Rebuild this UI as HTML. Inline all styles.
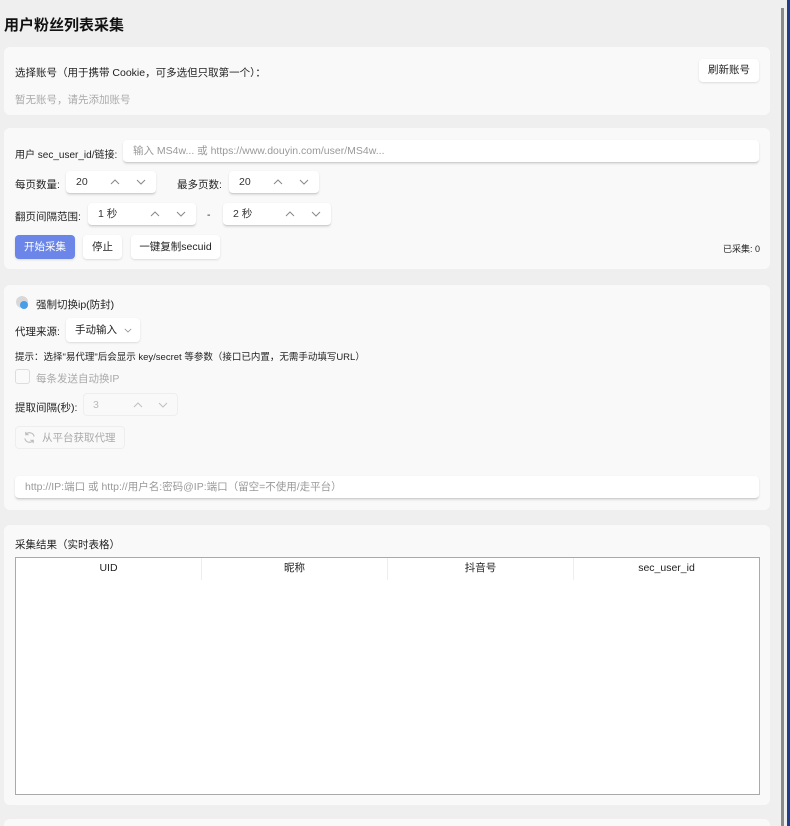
<!DOCTYPE html>
<html><head><meta charset="utf-8"><style>
*{box-sizing:border-box;margin:0;padding:0}
html,body{width:790px;height:826px;overflow:hidden}
body{background:#efefef;font-family:"Liberation Sans","Noto Sans CJK SC",sans-serif;font-size:10.5px;color:#222;position:relative}
.abs{position:absolute}
.card{position:absolute;left:4px;width:766px;background:#f9f9f9;border-radius:6px}
.btn{position:absolute;background:#fff;border-radius:4px;box-shadow:0 1px 2px rgba(0,0,0,.12);text-align:center}
.inp{position:absolute;background:#fff;border-radius:4px;box-shadow:0 1px 2px rgba(0,0,0,.12);border-bottom:1px solid #d0d0d0;color:#333;padding-left:10px}
.arr{position:absolute;top:8px}
.t{position:absolute;white-space:nowrap}
</style></head><body>
<svg width="0" height="0" style="position:absolute"><defs>
<symbol id="up" viewBox="0 0 10 6"><path d="M1 5L5 1L9 5" fill="none" stroke="#888" stroke-width="1"/></symbol>
<symbol id="dn" viewBox="0 0 10 6"><path d="M1 1L5 5L9 1" fill="none" stroke="#888" stroke-width="1"/></symbol>
</defs></svg>
<div class="t" style="left:4px;top:14px;font-size:15px;font-weight:bold;color:#111">用户粉丝列表采集</div>

<div class="card" style="top:47px;height:68px"></div>
<div class="t" style="left:15px;top:65px">选择账号（用于携带 Cookie，可多选但只取第一个）：</div>
<div class="t" style="left:15px;top:92px;color:#aaa">暂无账号，请先添加账号</div>
<div class="btn" style="left:699px;top:59px;width:60px;height:23px;line-height:23px">刷新账号</div>

<div class="card" style="top:128px;height:141px"></div>
<div class="t" style="left:15px;top:146px;font-size:10px">用户 sec_user_id/链接:</div>
<div class="inp" style="left:123px;top:140px;width:636px;height:23px;line-height:23px;color:#999">输入 MS4w... 或 https://www.douyin.com/user/MS4w...</div>
<div class="t" style="left:15px;top:177px">每页数量:</div>
<div class="inp" style="left:66px;top:171px;width:90px;height:23px;line-height:23px">20<svg class="arr" style="left:44px" width="10" height="6"><use href="#up"/></svg><svg class="arr" style="left:70px" width="10" height="6"><use href="#dn"/></svg></div>
<div class="t" style="left:177px;top:177px">最多页数:</div>
<div class="inp" style="left:229px;top:171px;width:90px;height:23px;line-height:23px">20<svg class="arr" style="left:44px" width="10" height="6"><use href="#up"/></svg><svg class="arr" style="left:70px" width="10" height="6"><use href="#dn"/></svg></div>
<div class="t" style="left:15px;top:209px">翻页间隔范围:</div>
<div class="inp" style="left:88px;top:203px;width:108px;height:23px;line-height:23px">1 秒<svg class="arr" style="left:62px" width="10" height="6"><use href="#up"/></svg><svg class="arr" style="left:88px" width="10" height="6"><use href="#dn"/></svg></div>
<div class="t" style="left:207px;top:209px">-</div>
<div class="inp" style="left:223px;top:203px;width:108px;height:23px;line-height:23px">2 秒<svg class="arr" style="left:62px" width="10" height="6"><use href="#up"/></svg><svg class="arr" style="left:88px" width="10" height="6"><use href="#dn"/></svg></div>
<div class="btn" style="left:15px;top:235px;width:60px;height:24px;line-height:24px;background:#6b86e8;color:#fff">开始采集</div>
<div class="btn" style="left:83px;top:235px;width:39px;height:24px;line-height:24px">停止</div>
<div class="btn" style="left:131px;top:235px;width:89px;height:24px;line-height:24px">一键复制secuid</div>
<div class="t" style="left:723px;top:242px;font-size:9px">已采集: 0</div>

<div class="card" style="top:285px;height:225px"></div>
<div class="abs" style="left:16px;top:296px;width:12px;height:12px;border-radius:50%;background:#d8d8d8"></div>
<div class="abs" style="left:20px;top:301px;width:8px;height:8px;border-radius:50%;background:#4a9ee8"></div>
<div class="t" style="left:36px;top:297px">强制切换ip(防封)</div>
<div class="t" style="left:15px;top:324px">代理来源:</div>
<div class="btn" style="left:66px;top:318px;width:74px;height:24px;line-height:24px;text-align:left;padding-left:9px">手动输入<svg style="position:absolute;left:58px;top:10px" width="8" height="5" viewBox="0 0 10 6"><use href="#dn"/></svg></div>
<div class="t" style="left:15px;top:349px;font-size:9.5px">提示：选择"易代理"后会显示 key/secret 等参数（接口已内置，无需手动填写URL）</div>
<div class="abs" style="left:15px;top:369px;width:15px;height:15px;border:1px solid #ddd;border-radius:3px;background:#fafafa"></div>
<div class="t" style="left:36px;top:371px;color:#aaa">每条发送自动换IP</div>
<div class="t" style="left:15px;top:400px">提取间隔(秒):</div>
<div class="abs" style="left:83px;top:393px;width:95px;height:23px;border:1px solid #eee;border-radius:4px;background:#f9f9f9;color:#bbb;padding-left:9px;line-height:22px">3<svg class="arr" style="left:49px;opacity:.5" width="10" height="6"><use href="#up"/></svg><svg class="arr" style="left:74px;opacity:.5" width="10" height="6"><use href="#dn"/></svg></div>
<div class="abs" style="left:15px;top:426px;width:110px;height:23px;border:1px solid #eee;border-radius:4px;line-height:22px;color:#aaa;padding-left:26px">从平台获取代理</div>
<svg class="abs" style="left:23px;top:431px" width="13" height="13" viewBox="0 0 14 14"><path d="M12 6A5 5 0 0 0 3 4M2 8A5 5 0 0 0 11 10" fill="none" stroke="#bbb" stroke-width="1.2"/><path d="M3 1V4H6M11 13V10H8" fill="none" stroke="#bbb" stroke-width="1.2"/></svg>
<div class="inp" style="left:15px;top:476px;width:744px;height:23px;line-height:23px;color:#999">http://IP:端口 或 http://用户名:密码@IP:端口（留空=不使用/走平台）</div>

<div class="card" style="top:525px;height:280px"></div>
<div class="t" style="left:15px;top:537px">采集结果（实时表格）</div>
<div class="abs" style="left:15px;top:557px;width:745px;height:238px;background:#fff;border:1px solid #aaa"></div>
<div class="abs" style="left:16px;top:558px;width:743px;height:22px;display:flex">
<div style="flex:1;text-align:center;line-height:20px;border-right:1px solid #eee">UID</div>
<div style="flex:1;text-align:center;line-height:20px;border-right:1px solid #eee">昵称</div>
<div style="flex:1;text-align:center;line-height:20px;border-right:1px solid #eee">抖音号</div>
<div style="flex:1;text-align:center;line-height:20px">sec_user_id</div>
</div>
<div class="card" style="top:819px;height:7px;border-radius:6px 6px 0 0"></div>

<div class="abs" style="left:781px;top:8px;width:3px;height:818px;background:#8a8a8a"></div>
<div class="abs" style="left:787px;top:0;width:3px;height:826px;background:#1e3d8a"></div>
</body></html>
